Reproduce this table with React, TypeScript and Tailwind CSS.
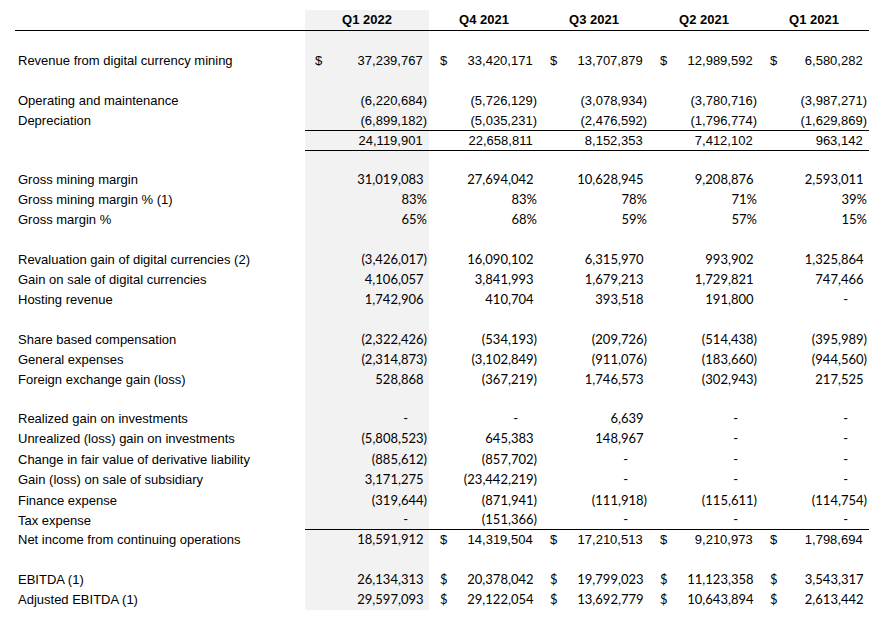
import React from 'react';

type Font = 'a' | 'c';

type Row =
  | { kind: 'gap'; h: string }
  | {
      kind: 'data';
      label: string;
      values: string[];
      h: string;
      font: Font;
      firstFont?: Font;
      dollar?: 'all' | 'rest';
      line?: boolean;
    };

const arial = "font-['Liberation_Sans',Arial,sans-serif]";
const calibri = "font-['Lato','Open_Sans',sans-serif]";

const rows: Row[] = [
  { kind: 'gap', h: 'h-[20px]' },
  {
    kind: 'data',
    label: 'Revenue from digital currency mining',
    values: ['37,239,767', '33,420,171', '13,707,879', '12,989,592', '6,580,282'],
    h: 'h-[20px]',
    font: 'a',
    dollar: 'all',
  },
  { kind: 'gap', h: 'h-[20px]' },
  {
    kind: 'data',
    label: 'Operating and maintenance',
    values: ['(6,220,684)', '(5,726,129)', '(3,078,934)', '(3,780,716)', '(3,987,271)'],
    h: 'h-[20px]',
    font: 'a',
  },
  {
    kind: 'data',
    label: 'Depreciation',
    values: ['(6,899,182)', '(5,035,231)', '(2,476,592)', '(1,796,774)', '(1,629,869)'],
    h: 'h-[20px]',
    font: 'a',
    line: true,
  },
  {
    kind: 'data',
    label: '',
    values: ['24,119,901', '22,658,811', '8,152,353', '7,412,102', '963,142'],
    h: 'h-[20px]',
    font: 'a',
    line: true,
  },
  { kind: 'gap', h: 'h-[19px]' },
  {
    kind: 'data',
    label: 'Gross mining margin',
    values: ['31,019,083', '27,694,042', '10,628,945', '9,208,876', '2,593,011'],
    h: 'h-[20px]',
    font: 'c',
  },
  {
    kind: 'data',
    label: 'Gross mining margin % (1)',
    values: ['83%', '83%', '78%', '71%', '39%'],
    h: 'h-[20px]',
    font: 'c',
  },
  {
    kind: 'data',
    label: 'Gross margin %',
    values: ['65%', '68%', '59%', '57%', '15%'],
    h: 'h-[20px]',
    font: 'c',
  },
  { kind: 'gap', h: 'h-[20px]' },
  {
    kind: 'data',
    label: 'Revaluation gain of digital currencies (2)',
    values: ['(3,426,017)', '16,090,102', '6,315,970', '993,902', '1,325,864'],
    h: 'h-[20px]',
    font: 'c',
  },
  {
    kind: 'data',
    label: 'Gain on sale of digital currencies',
    values: ['4,106,057', '3,841,993', '1,679,213', '1,729,821', '747,466'],
    h: 'h-[20px]',
    font: 'c',
  },
  {
    kind: 'data',
    label: 'Hosting revenue',
    values: ['1,742,906', '410,704', '393,518', '191,800', '-'],
    h: 'h-[20px]',
    font: 'c',
  },
  { kind: 'gap', h: 'h-[20px]' },
  {
    kind: 'data',
    label: 'Share based compensation',
    values: ['(2,322,426)', '(534,193)', '(209,726)', '(514,438)', '(395,989)'],
    h: 'h-[20px]',
    font: 'c',
  },
  {
    kind: 'data',
    label: 'General expenses',
    values: ['(2,314,873)', '(3,102,849)', '(911,076)', '(183,660)', '(944,560)'],
    h: 'h-[20px]',
    font: 'c',
  },
  {
    kind: 'data',
    label: 'Foreign exchange gain (loss)',
    values: ['528,868', '(367,219)', '1,746,573', '(302,943)', '217,525'],
    h: 'h-[20px]',
    font: 'c',
  },
  { kind: 'gap', h: 'h-[19px]' },
  {
    kind: 'data',
    label: 'Realized gain on investments',
    values: ['-', '-', '6,639', '-', '-'],
    h: 'h-[20px]',
    font: 'c',
  },
  {
    kind: 'data',
    label: 'Unrealized (loss) gain on investments',
    values: ['(5,808,523)', '645,383', '148,967', '-', '-'],
    h: 'h-[20px]',
    font: 'c',
  },
  {
    kind: 'data',
    label: 'Change in fair value of derivative liability',
    values: ['(885,612)', '(857,702)', '-', '-', '-'],
    h: 'h-[21px]',
    font: 'c',
  },
  {
    kind: 'data',
    label: 'Gain (loss) on sale of subsidiary',
    values: ['3,171,275', '(23,442,219)', '-', '-', '-'],
    h: 'h-[20px]',
    font: 'c',
  },
  {
    kind: 'data',
    label: 'Finance expense',
    values: ['(319,644)', '(871,941)', '(111,918)', '(115,611)', '(114,754)'],
    h: 'h-[21px]',
    font: 'c',
  },
  {
    kind: 'data',
    label: 'Tax expense',
    values: ['-', '(151,366)', '-', '-', '-'],
    h: 'h-[19px]',
    font: 'c',
    line: true,
  },
  {
    kind: 'data',
    label: 'Net income from continuing operations',
    values: ['18,591,912', '14,319,504', '17,210,513', '9,210,973', '1,798,694'],
    h: 'h-[20px]',
    font: 'a',
    firstFont: 'c',
    dollar: 'rest',
  },
  { kind: 'gap', h: 'h-[20px]' },
  {
    kind: 'data',
    label: 'EBITDA (1)',
    values: ['26,134,313', '20,378,042', '19,799,023', '11,123,358', '3,543,317'],
    h: 'h-[20px]',
    font: 'c',
    dollar: 'rest',
  },
  {
    kind: 'data',
    label: 'Adjusted EBITDA (1)',
    values: ['29,597,093', '29,122,054', '13,692,779', '10,643,894', '2,613,442'],
    h: 'h-[20px]',
    font: 'c',
    dollar: 'rest',
  },
];

const heads = ['Q1 2022', 'Q4 2021', 'Q3 2021', 'Q2 2021', 'Q1 2021'];

function Amount({ v }: { v: string }) {
  if (v === '-') return <span className="pr-[19px]">-</span>;
  // accounting format: positives keep room for the closing paren
  const closed = v.endsWith(')') || v.endsWith('%');
  return (
    <span>
      {v}
      {!closed && <span className="invisible">)</span>}
    </span>
  );
}

export default function App() {
  return (
    <div className="w-[881px] h-[623px] bg-white text-black text-[13px] leading-none pt-[10px] pl-[15px]">
      {/* header row */}
      <div className={`flex w-[854px] h-[21px] border-b border-black font-bold ${arial}`}>
        <div className="w-[290px]" />
        {heads.map((h, i) => (
          <div
            key={h}
            className={`flex items-center justify-center pb-[1px] ${i === 0 ? 'w-[124px] bg-[#f2f2f2]' : 'w-[110px]'}`}
          >
            {h}
          </div>
        ))}
      </div>

      {rows.map((r, idx) => {
        if (r.kind === 'gap') {
          return (
            <div key={idx} className={`flex ${r.h}`}>
              <div className="w-[290px]" />
              <div className="w-[124px] bg-[#f2f2f2]" />
            </div>
          );
        }
        return (
          <div key={idx} className={`flex ${r.h}`}>
            <div className={`w-[290px] pl-[3px] pb-[1px] flex items-center ${arial}`}>{r.label}</div>
            <div className={`flex w-[564px] ${r.line ? 'border-b border-black' : ''}`}>
              {r.values.map((v, i) => {
                const f = i === 0 && r.firstFont ? r.firstFont : r.font;
                const showDollar = r.dollar === 'all' || (r.dollar === 'rest' && i > 0);
                return (
                  <div
                    key={i}
                    className={`flex items-center justify-between pr-[2px] pb-[1px] ${
                      i === 0 ? 'w-[124px] bg-[#f2f2f2] pl-[10px]' : 'w-[110px] pl-[11px]'
                    } ${f === 'a' ? arial : calibri}`}
                  >
                    <span>{showDollar ? '$' : ''}</span>
                    <Amount v={v} />
                  </div>
                );
              })}
            </div>
          </div>
        );
      })}
    </div>
  );
}
